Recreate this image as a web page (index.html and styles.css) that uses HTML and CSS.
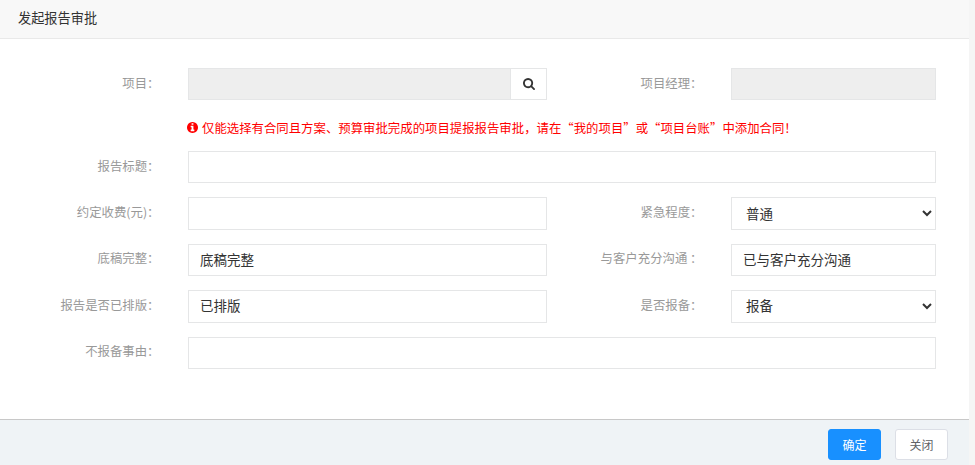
FILE: index.html
```html
<!DOCTYPE html>
<html lang="zh-CN">
<head>
<meta charset="utf-8">
<title>发起报告审批</title>
<link rel="stylesheet" href="styles.css">
</head>
<body>
<div class="dialog">
  <div class="title">发起报告审批</div>
  <form class="form">
    <div class="row">
      <label class="label">项目：</label>
      <div class="group">
        <input class="field readonly grow" readonly>
        <button type="button" class="addon" aria-label="搜索">
          <svg viewBox="0 0 1664 1792" width="12" height="13"><path fill="#333" d="M1152 704q0-185-131.500-316.500T704 256 387.500 387.500 256 704t131.500 316.500T704 1152t316.500-131.500T1152 704zm512 832q0 52-38 90t-90 38q-54 0-90-38l-343-342q-179 124-399 124-143 0-273.500-55.500t-225-150-150-225T0 704t55.500-273.500 150-225 225-150T704 0t273.500 55.500 225 150 150 225T1408 704q0 220-124 399l343 343q37 37 37 90z"/></svg>
        </button>
      </div>
      <label class="label">项目经理：</label>
      <input class="field readonly" readonly>
    </div>
    <div class="notice">
      <svg viewBox="0 0 1536 1536" width="11" height="11"><path fill="#f00" d="M1024 1248v-160q0-14-9-23t-23-9h-96V544q0-14-9-23t-23-9H544q-14 0-23 9t-9 23v160q0 14 9 23t23 9h96v320h-96q-14 0-23 9t-9 23v160q0 14 9 23t23 9h448q14 0 23-9t9-23zM896 352V192q0-14-9-23t-23-9H672q-14 0-23 9t-9 23v160q0 14 9 23t23 9h192q14 0 23-9t9-23zm640 416q0 209-103 385.500T1153.500 1433 768 1536t-385.500-103T103 1153.500 0 768t103-385.500T382.500 103 768 0t385.500 103T1433 382.500 1536 768z"/></svg>
      <span>仅能选择有合同且方案、预算审批完成的项目提报报告审批，请在“我的项目”或“项目台账”中添加合同！</span>
    </div>
    <div class="row wide">
      <label class="label">报告标题：</label>
      <input class="field">
    </div>
    <div class="row">
      <label class="label">约定收费(元)：</label>
      <input class="field">
      <label class="label">紧急程度：</label>
      <select class="field picker"><option>普通</option></select>
    </div>
    <div class="row">
      <label class="label">底稿完整：</label>
      <input class="field" value="底稿完整">
      <label class="label">与客户充分沟通 ：</label>
      <input class="field" value="已与客户充分沟通">
    </div>
    <div class="row">
      <label class="label">报告是否已排版：</label>
      <input class="field" value="已排版">
      <label class="label">是否报备：</label>
      <select class="field picker"><option>报备</option></select>
    </div>
    <div class="row wide">
      <label class="label">不报备事由：</label>
      <input class="field">
    </div>
  </form>
  <div class="footer">
    <button type="button" class="btn primary">确定</button>
    <button type="button" class="btn plain">关闭</button>
  </div>
</div>
</body>
</html>
```
FILE: styles.css
```css
* { box-sizing: border-box; }
html, body { margin: 0; height: 100%; overflow: hidden; }
body {
  background: #f5f5f5;
  font-family: "Noto Sans CJK SC", "Liberation Sans", sans-serif;
  font-size: 12px;
  color: #333;
}
.dialog {
  width: 969px;
  height: 465px;
  background: #fff;
  display: flex;
  flex-direction: column;
}
.title {
  height: 39px;
  flex: none;
  padding-left: 18px;
  background: #f8f8f8;
  border-bottom: 1px solid #e9e9e9;
  font-size: 13.2px;
  line-height: 36px;
  color: #333;
}
.form {
  flex: 1;
  padding: 29px 33px 0 0;
  display: flex;
  flex-direction: column;
  gap: 14px;
}
.row {
  display: grid;
  grid-template-columns: 153px 359px 114px 205px;
  column-gap: 35px;
  align-items: center;
}
.row.wide { grid-template-columns: 153px 748px; }
.label {
  text-align: right;
  color: #999;
  font-size: 12.4px;
  white-space: nowrap;
  margin-top: -3px;
  margin-right: -6.5px;
}
.field {
  height: 32.4px;
  width: 100%;
  border: 1px solid #e5e6e7;
  background: #fff;
  padding: 0 11px 2px;
  font: inherit;
  font-size: 13.5px;
  color: #333;
  border-radius: 0;
  outline: none;
}
.readonly { background: #eee; }
.picker { padding-left: 10px; }
.group { display: flex; }
.grow { flex: 1; border-right: 0; }
.addon {
  flex: none;
  width: 37px;
  height: 32.4px;
  border: 1px solid #e5e6e7;
  background: #fff;
  padding: 0;
  display: flex;
  align-items: center;
  justify-content: center;
}
.notice {
  height: 18.6px;
  margin: 4px 0 0 187px;
  display: flex;
  align-items: center;
  gap: 4px;
  color: #f00;
  font-size: 12.4px;
  white-space: nowrap;
}
.footer {
  height: 46px;
  flex: none;
  background: #eff3f6;
  border-top: 1px solid #c8c8c8;
  display: flex;
  justify-content: flex-end;
  gap: 14px;
  padding: 9px 21px 0 0;
}
.btn {
  width: 53px;
  height: 31px;
  border-radius: 3px;
  font: inherit;
  font-size: 12px;
  padding: 0;
}
.primary { background: #1890ff; border: 1px solid #1890ff; color: #fff; }
.plain { background: #fff; border: 1px solid #dcdfe6; color: #606266; }
```
